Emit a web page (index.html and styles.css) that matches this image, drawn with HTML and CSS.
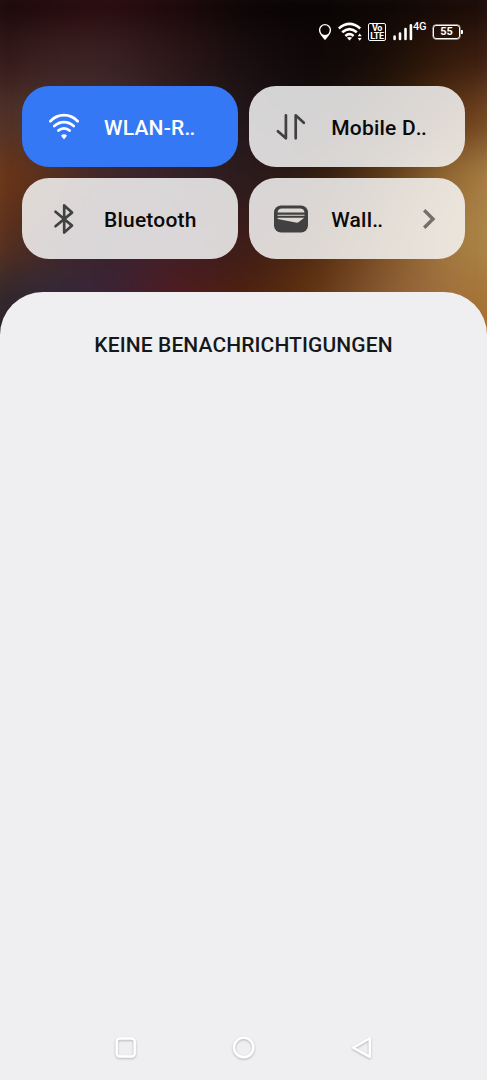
FILE: index.html
```html
<!DOCTYPE html>
<html lang="de">
<head>
  <meta charset="UTF-8">
  <meta name="viewport" content="width=device-width, initial-scale=1.0">
  <title>Benachrichtigungen</title>
  <link rel="stylesheet" href="styles.css">
</head>
<body>
  <div class="wallpaper">
    <div class="glow">
      <i class="g1"></i>
      <i class="g2"></i>
      <i class="g3"></i>
      <i class="g4"></i>
      <i class="g5"></i>
      <i class="g6"></i>
      <i class="g7"></i>
    </div>
  </div>

  <header class="statusbar">
    <svg class="pin" width="14" height="18" viewBox="0 0 14 18">
      <path d="M7 16C5.200 13.800 1.600 10.600 1.600 7a5.400 5.400 0 0 1 10.800 0C12.400 10.600 8.800 13.800 7 16z" fill="none" stroke="#fff" stroke-width="1.400"/>
      <path d="M3 10.800Q7 13 11 10.800L7 16.500z" fill="#fff"/>
    </svg>
    <svg class="wlan" width="24" height="20" viewBox="0 0 24 20">
      <g fill="none" stroke="#fff" stroke-width="2.600">
        <path d="M.8 6.500Q11.500-2.600 22.200 6.500"/>
        <path d="M4.200 10.300Q11.500 4 18.800 10.300"/>
        <path d="M7.400 13.900Q11.500 10.400 15.600 13.900"/>
      </g>
      <path d="M8.900 15.800Q11.500 14.200 14.100 15.800L11.500 18.600z" fill="#fff"/>
      <path d="M21.700 11.400l2 2.900h-4zM21.700 18.800l2-2.900h-4z" fill="#fff"/>
    </svg>
    <div class="volte"><span>Vo</span><span>LTE</span></div>
    <svg class="signal" width="20" height="18" viewBox="0 0 20 18">
      <g stroke="#fff" stroke-width="2.600" stroke-linecap="round">
        <path d="M1.600 13.500v2.500M7 10.500V16M12.500 6v10M17.900 2.200V16"/>
      </g>
    </svg>
    <span class="net">4G</span>
    <div class="battery">55</div>
  </header>

  <main class="tiles">
    <div class="tile active">
      <svg class="icon" width="36" height="36" viewBox="0 0 36 36">
        <g fill="none" stroke="#fff" stroke-width="2.700" stroke-linecap="round">
          <path d="M4.300 12.200C12.300 4.200 23.700 4.200 31.700 12.200"/>
          <path d="M8.300 17.100C14 11.800 22 11.800 27.700 17.100"/>
          <path d="M12.400 21.600C15.600 18.700 20.400 18.700 23.600 21.600"/>
        </g>
        <path d="M15.100 26.300Q18 24 20.900 26.300Q20.700 27.800 18 30.300Q15.300 27.800 15.100 26.300z" fill="#fff"/>
      </svg>
      <span class="name">WLAN-R<span class="dots">..</span></span>
    </div>
    <div class="tile">
      <svg class="icon" width="36" height="36" viewBox="0 0 36 36">
        <g fill="none" stroke="#414141" stroke-width="2.700" stroke-linecap="round" stroke-linejoin="round">
          <path d="M12.900 6.300v23L4.900 22.200"/>
          <path d="M22.700 29.300v-23l8.100 7.500"/>
        </g>
      </svg>
      <span class="name">Mobile D<span class="dots">..</span></span>
    </div>
    <div class="tile">
      <svg class="icon" width="36" height="36" viewBox="0 0 36 36">
        <path d="M9.500 10.800L26 24.600 18.200 31.600V4.400L26 11.600 9.500 25.200" fill="none" stroke="#414141" stroke-width="2.700" stroke-linecap="round" stroke-linejoin="round"/>
      </svg>
      <span class="name">Bluetooth</span>
    </div>
    <div class="tile">
      <svg class="icon" width="36" height="36" viewBox="0 0 36 36">
        <rect x="1" y="4.500" width="34" height="27" rx="7" fill="#414141"/>
        <path fill="#ded8d4" d="M4.500 11.400Q5 7.500 9 7.500h18Q31 7.500 31.500 11.400zM4.500 14.700h27v-.9h-27zM4.700 16.800L31.300 16.800 25.800 20.900Q24.400 22 22.700 21.600L4.700 17.900z"/>
      </svg>
      <span class="name">Wall<span class="dots">..</span></span>
      <svg class="arrow" width="14" height="22" viewBox="0 0 14 22">
        <path d="M2.200 2.200L11 11 2.200 19.800" fill="none" stroke="#746f6b" stroke-width="3.400"/>
      </svg>
    </div>
  </main>

  <section class="panel">
    <h1>KEINE BENACHRICHTIGUNGEN</h1>
    <nav class="navbar">
      <svg width="30" height="30" viewBox="0 0 30 30">
        <rect x="5.700" y="5.500" width="18" height="18" rx="3"/>
      </svg>
      <svg width="30" height="30" viewBox="0 0 30 30">
        <circle cx="14.700" cy="14.500" r="9.700"/>
      </svg>
      <svg width="30" height="30" viewBox="0 0 30 30">
        <path d="M6.200 14.700L22.800 5.300v18.600z"/>
      </svg>
    </nav>
  </section>
</body>
</html>
```
FILE: styles.css
```css
* {
  box-sizing: border-box;
}

body {
  margin: 0;
  height: 1080px;
  overflow: hidden;
  display: flex;
  flex-direction: column;
  font-family: Roboto, "Liberation Sans", sans-serif;
  background: #efeff1;
}

/* blurred wallpaper behind the shade */

.wallpaper {
  position: absolute;
  top: 0;
  left: 0;
  z-index: -1;
  width: 100%;
  height: 345px;
  overflow: hidden;
}

.glow {
  display: flex;
  flex-direction: column;
  height: 430px;
  margin: -40px -40px 0;
  filter: blur(20px);
}

.glow i {
  flex: 1;
}

.glow .g1 {
  flex: 0 0 65px;
  background: linear-gradient(90deg, #120506, #1c0608, #28080c, #1c0609, #0a0303, #070303, #0c0504, #140805, #1c0808);
}

.g2 {
  background: linear-gradient(90deg, #240c0c, #3a1e1e, #3c2223, #2c1618, #190d0f, #0d0707, #180d07, #361a0a, #40201a);
}

.g3 {
  background: linear-gradient(90deg, #50261a, #4e3630, #463335, #322226, #20161a, #150d0f, #2e1a09, #683a16, #805430);
}

.g4 {
  background: linear-gradient(90deg, #753a15, #623218, #40262a, #38222a, #2a1a1c, #2e1a10, #603c18, #9c7038, #b48e50);
}

.g5 {
  background: linear-gradient(90deg, #703814, #4c2a22, #38222c, #40202a, #3a1a18, #502810, #7c5020, #a88044, #b08848);
}

.g6 {
  background: linear-gradient(90deg, #30201a, #302a36, #38243a, #501b20, #4c200f, #603410, #8c5c38, #a4743e, #a8732c);
}

.g7 {
  background: linear-gradient(90deg, #181216, #28202a, #38203a, #501b1a, #4c200f, #603410, #8c5c38, #a46c2c, #a8620c);
}

/* status bar */

.statusbar {
  height: 86px;
  padding: 22px 24px 0 0;
  display: flex;
  justify-content: flex-end;
  align-items: flex-start;
  color: #fff;
}

.pin {
  margin: 1px 6px 0 0;
}

.wlan {
  margin-right: 6px;
}

.volte {
  width: 18px;
  height: 18px;
  margin: 1px 7px 0 0;
  border: 1.500px solid #fff;
  border-radius: 2px;
  display: flex;
  flex-direction: column;
  align-items: center;
  font-size: 9px;
  font-weight: 700;
  line-height: 8px;
  letter-spacing: -0.300px;
}

.signal {
  margin-top: 1px;
}

.net {
  width: 13px;
  margin-right: 7px;
  font-size: 11px;
  font-weight: 500;
  line-height: 10px;
  letter-spacing: -0.300px;
}

.battery {
  position: relative;
  width: 27px;
  height: 14px;
  margin: 3px 3px 0 0;
  border: 1.500px solid #fff;
  border-radius: 3px;
  box-shadow: 0 0 0 0.400px #fff;
  font-size: 11px;
  font-weight: 700;
  line-height: 12.500px;
  text-align: center;
}

.battery::after {
  content: "";
  position: absolute;
  right: -4px;
  top: 4px;
  width: 2px;
  height: 4px;
  border-radius: 0 1px 1px 0;
  background: #fff;
}

/* quick settings */

.tiles {
  display: grid;
  grid-template-columns: 1fr 1fr;
  grid-auto-rows: 81px;
  gap: 11px;
  padding: 0 22px 0 21.500px;
}

.tile {
  display: flex;
  align-items: center;
  padding: 0 29px 0 24px;
  border-radius: 27px;
  background: rgba(247, 247, 247, 0.850);
  color: #0a0a0a;
}

.tile.active {
  background: #3478f6;
  color: #fff;
}

.name {
  flex: 1;
  margin-left: 22.500px;
  padding-top: 2px;
  font-size: 21px;
  font-weight: 500;
  letter-spacing: 0.200px;
  white-space: nowrap;
}

.dots {
  letter-spacing: -0.700px;
}

/* notifications */

.panel {
  flex: 1;
  margin-top: 32.500px;
  display: flex;
  flex-direction: column;
  justify-content: space-between;
  border-radius: 43px 43px 0 0;
  background: #efeff1;
}

.panel h1 {
  margin: 40.500px 0 0;
  font-size: 21px;
  font-weight: 500;
  line-height: 26px;
  letter-spacing: 0.100px;
  text-align: center;
  color: #14181b;
}

.navbar {
  display: flex;
  justify-content: center;
  gap: 88px;
  padding-bottom: 17px;
}

.navbar svg {
  fill: none;
  stroke: #fff;
  stroke-width: 2.400;
  stroke-linejoin: round;
  filter: drop-shadow(0 1px 1px rgba(0, 0, 0, 0.250));
}
```
